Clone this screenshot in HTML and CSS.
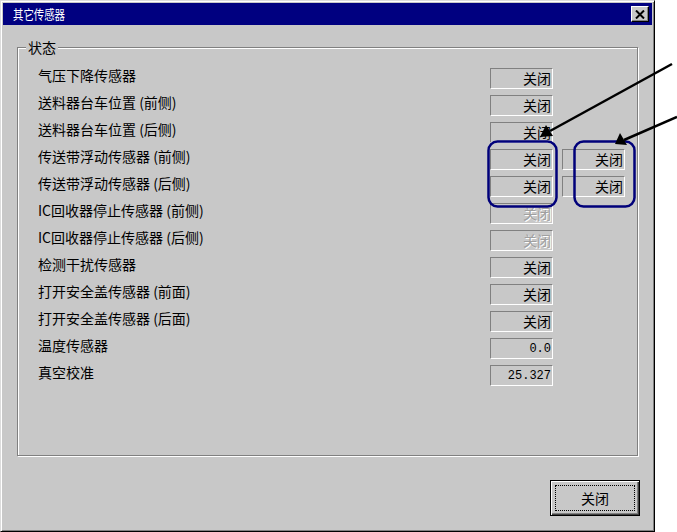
FILE: index.html
```html
<!DOCTYPE html>
<html lang="zh">
<head>
    <meta charset="UTF-8">
    <title>其它传感器</title>
    <link rel="stylesheet" href="styles.css">
</head>
<body>
    <div class="dialog">
        <div class="titlebar">
            <span class="title">其它传感器</span>
            <span class="close-btn">
                <svg width="10" height="9" viewBox="0 0 10 9"><path d="M1 0.5 L9 8.5 M9 0.5 L1 8.5" stroke="#000" stroke-width="2"/></svg>
            </span>
        </div>
        <div class="body">
            <div class="group">
                <span class="group-label">状态</span>
                <div class="rows">
                    <div class="row"><span class="label">气压下降传感器</span><span class="value">关闭</span></div>
                    <div class="row"><span class="label">送料器台车位置 (前侧)</span><span class="value">关闭</span></div>
                    <div class="row"><span class="label">送料器台车位置 (后侧)</span><span class="value">关闭</span></div>
                    <div class="row"><span class="label">传送带浮动传感器 (前侧)</span><span class="value">关闭</span><span class="value">关闭</span></div>
                    <div class="row"><span class="label">传送带浮动传感器 (后侧)</span><span class="value">关闭</span><span class="value">关闭</span></div>
                    <div class="row"><span class="label">IC回收器停止传感器 (前侧)</span><span class="value disabled">关闭</span></div>
                    <div class="row"><span class="label">IC回收器停止传感器 (后侧)</span><span class="value disabled">关闭</span></div>
                    <div class="row"><span class="label">检测干扰传感器</span><span class="value">关闭</span></div>
                    <div class="row"><span class="label">打开安全盖传感器 (前面)</span><span class="value">关闭</span></div>
                    <div class="row"><span class="label">打开安全盖传感器 (后面)</span><span class="value">关闭</span></div>
                    <div class="row"><span class="label">温度传感器</span><span class="value num">0.0</span></div>
                    <div class="row"><span class="label">真空校准</span><span class="value num">25.327</span></div>
                </div>
            </div>
        </div>
        <div class="actions">
            <button class="btn"><span class="btn-focus">关闭</span></button>
        </div>
    </div>

    <!-- callout marks drawn over the dialog -->
    <svg class="marks" width="677" height="532" viewBox="0 0 677 532">
        <rect x="488.5" y="141.5" width="68" height="65" rx="9" fill="none" stroke="#00007a" stroke-width="2.5"/>
        <rect x="574.5" y="141.5" width="60" height="65" rx="9" fill="none" stroke="#00007a" stroke-width="2.5"/>
        <line x1="672" y1="64" x2="550" y2="131" stroke="#000" stroke-width="2.5"/>
        <path d="M540 137 L546 125 L553 136 Z" fill="#000"/>
        <line x1="677" y1="117" x2="624" y2="140" stroke="#000" stroke-width="2.5"/>
        <path d="M615 144 L620 133 L627 145 Z" fill="#000"/>
    </svg>
</body>
</html>
```

FILE: styles.css
```css
body {
    margin: 0;
    width: 677px;
    height: 532px;
    overflow: hidden;
    position: relative;
    background: #fff;
    font-family: "Noto Sans CJK SC", "DejaVu Sans", sans-serif;
    font-size: 14px;
    color: #000;
}
.dialog {
    width: 655px;
    height: 532px;
    box-sizing: border-box;
    padding: 2px;
    background: #c8c8c8;
    border: 1px solid;
    border-color: #dcdcdc #000 #000 #dcdcdc;
    box-shadow: inset 1px 1px 0 #fff, inset -1px -1px 0 #808080;
}
.titlebar {
    height: 22px;
    background: #000080;
    color: #fff;
    display: flex;
    align-items: center;
    justify-content: space-between;
    padding: 0 3px 0 10px;
}
.title {
    font-size: 13px;
    line-height: 14px;
    display: inline-block;
    transform: scaleX(0.8);
    transform-origin: left center;
}
.close-btn {
    width: 18px;
    height: 16px;
    box-sizing: border-box;
    background: #c8c8c8;
    border: 1px solid;
    border-color: #fff #000 #000 #fff;
    box-shadow: inset -1px -1px 0 #808080;
    display: flex;
    align-items: center;
    justify-content: center;
}
.body {
    padding: 22px 14px 0;
}
.group {
    position: relative;
    height: 409px;
    box-sizing: border-box;
    border: 1px solid #808080;
    box-shadow: inset 1px 1px 0 #fff, 1px 1px 0 #fff;
    padding: 20px 12px 0 20px;
}
.group-label {
    position: absolute;
    top: -9px;
    left: 8px;
    padding: 0 2px;
    line-height: 16px;
    background: #c8c8c8;
}
.rows {
    display: flex;
    flex-direction: column;
    gap: 6px;
}
.row {
    display: grid;
    grid-template-columns: 1fr 63px 63px;
    column-gap: 9px;
    height: 21px;
}
.label {
    line-height: 14px;
    align-self: start;
    white-space: nowrap;
}
.value {
    box-sizing: border-box;
    height: 21px;
    border: 1px solid;
    border-color: #808080 #fff #fff #808080;
    text-align: right;
    padding-right: 1px;
    line-height: 19px;
}
.value.disabled {
    color: #a0a0a0;
    text-shadow: 1px 1px 0 #fff;
}
.value.num {
    font-family: "Liberation Mono", monospace;
    font-size: 12px;
    padding-top: 1px;
}
.actions {
    display: flex;
    justify-content: flex-end;
    padding: 24px 12px 0 0;
}
.btn {
    width: 90px;
    height: 36px;
    box-sizing: border-box;
    margin: 0;
    padding: 4px;
    background: #c8c8c8;
    border: 1px solid #000;
    box-shadow: inset 1px 1px 0 #fff, inset -1px -1px 0 #404040, inset -2px -2px 0 #808080;
    font-family: inherit;
    font-size: 14px;
    color: #000;
    display: flex;
}
.btn-focus {
    flex: 1;
    border: 1px dotted #000;
    display: flex;
    align-items: center;
    justify-content: center;
}
.marks {
    position: absolute;
    left: 0;
    top: 0;
    pointer-events: none;
}
```
